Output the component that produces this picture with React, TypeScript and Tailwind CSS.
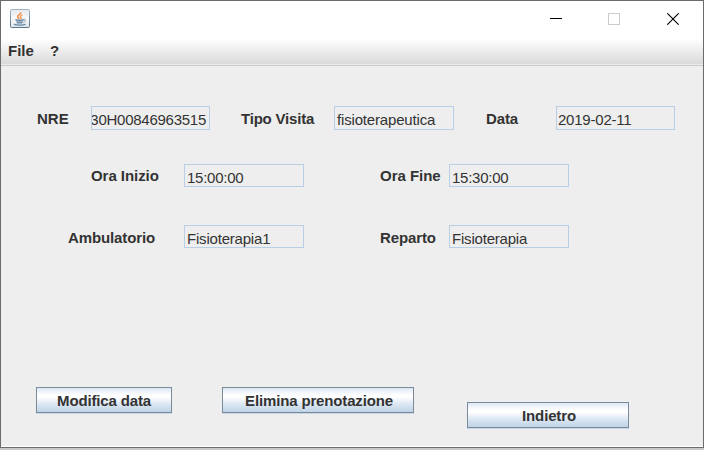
import type { ReactNode } from "react";

function Label({ className = "", children }: { className?: string; children: ReactNode }) {
  return (
    <label className={`block h-[17px] shrink-0 whitespace-nowrap font-bold leading-[17px] ${className}`}>
      {children}
    </label>
  );
}

function Field({ className = "", children }: { className?: string; children: ReactNode }) {
  return (
    <div className={`shrink-0 overflow-hidden whitespace-nowrap border border-[#b8cfe5] leading-[17px] ${className}`}>
      {children}
    </div>
  );
}

function MetalButton({ className = "", children }: { className?: string; children: ReactNode }) {
  return (
    <button
      className={`block h-[26px] shrink-0 border border-[#7a8a99] bg-[linear-gradient(to_bottom,#dde8f3_0%,#ffffff_30%,#ffffff_38%,#dde8f3_66%,#bfd3e7_100%)] pt-[4px] text-center font-bold leading-[17px] tracking-[-0.15px] shadow-[0_1px_0_#c5d7e8] ${className}`}
    >
      <span className="block h-[20px]">{children}</span>
    </button>
  );
}

function JavaIcon() {
  return (
    <svg width="20" height="20" viewBox="0 0 20 20" fill="none">
      <defs>
        <linearGradient id="tile" x1="0" y1="0" x2="0" y2="1">
          <stop offset="0" stopColor="#e4e9ed" />
          <stop offset="0.5" stopColor="#f8f9fa" />
          <stop offset="1" stopColor="#dfe4e8" />
        </linearGradient>
        <linearGradient id="edge" x1="0" y1="0" x2="0" y2="1">
          <stop offset="0" stopColor="#a3b4c2" />
          <stop offset="1" stopColor="#58758b" />
        </linearGradient>
      </defs>
      <rect x="0.5" y="0.5" width="19" height="18" rx="1.2" fill="url(#tile)" stroke="url(#edge)" />
      <path d="M10.800 3.200c.6 1.800-3.400 2.700-3.200 4.500.1 1 1 1.600 1.800 2.400" stroke="#ee8a3c" strokeWidth="1.500" />
      <path d="M12.400 5.900c-2 .8-2.700 1.700-1.500 2.700.6.6.1 1.200-.7 1.700" stroke="#ee9c5c" strokeWidth="1.400" />
      <path d="M5.400 10.500c.4.900 8 .9 8.400 0l-1.300 3.300H6.800z" fill="#9bb1c4" />
      <path d="M5.400 10.500c2 .8 6.400.8 8.400 0M6.800 13.900h5.600" stroke="#6387a5" strokeWidth="1.100" />
      <path d="M13.200 10.400c2.900-.8 2.900 1.900.2 2.700" stroke="#7895ad" />
      <path d="M4 15.300c1.800 1.200 9.400 1.200 11.600 0" stroke="#6387a5" strokeWidth="1.200" />
    </svg>
  );
}

export default function App() {
  return (
    <div className="h-[450px] w-[704px] overflow-hidden bg-[#c8c8c8] font-['Liberation_Sans',Arial,sans-serif] text-[15px] text-[#333333]">
      <div className="flex h-[448px] w-[704px] flex-col border border-[#6b6b6b] bg-[#eeeeee]">
        <header className="flex h-[36px] shrink-0 items-start bg-white">
          <div className="pl-[9px] pt-[8px]">
            <JavaIcon />
          </div>
          <div className="ml-auto flex items-start pr-[24px] pt-[12px]">
            <svg width="12" height="12" className="mr-[46px]" shapeRendering="crispEdges">
              <path d="M0 5.500H12" stroke="#000" />
            </svg>
            <svg width="12" height="12" className="mr-[47px]" shapeRendering="crispEdges">
              <path d="M.5.5h11v11H.5z" fill="none" stroke="#cccccc" />
            </svg>
            <svg width="12" height="12">
              <path d="M.3.300 11.700 11.700M11.700.3.300 11.700" stroke="#000" strokeWidth="1.100" />
            </svg>
          </div>
        </header>

        <nav className="flex h-[29px] shrink-0 items-start border-b border-[#cccccc] bg-[linear-gradient(to_bottom,#ffffff_0%,#ffffff_6%,#dadada_96%,#eaeaea_97%)] pl-[7px] pt-[5px] font-bold leading-[17px]">
          <span className="w-[42px]">File</span>
          <span>?</span>
        </nav>

        <main className="flex flex-1 flex-col border-b border-white">
          <div className="mt-[40px] flex h-[24px] pl-[36px]">
            <Label className="mt-[4px] w-[54px]">NRE</Label>
            <Field className="flex h-[24px] w-[119px] justify-end pr-[3px] pt-[4px]">
              <span className="tracking-[-0.26px]">30H00846963515</span>
            </Field>
            <Label className="ml-[31px] mt-[4px] w-[93px] tracking-[-0.2px]">Tipo Visita</Label>
            <Field className="h-[24px] w-[120px] pl-[2px] pt-[4px] tracking-[-0.17px]">fisioterapeutica</Field>
            <Label className="ml-[32px] mt-[4px] w-[70px] tracking-[-0.1px]">Data</Label>
            <Field className="h-[24px] w-[119px] pl-[1px] pt-[4px] tracking-[-0.22px]">2019-02-11</Field>
          </div>

          <div className="mt-[34px] flex h-[23px] pl-[90px]">
            <Label className="mt-[3px] w-[93px] tracking-[-0.05px]">Ora Inizio</Label>
            <Field className="h-[23px] w-[120px] pl-[2px] pt-[4px] tracking-[-0.25px]">15:00:00</Field>
            <Label className="ml-[76px] mt-[3px] w-[69px] tracking-[-0.03px]">Ora Fine</Label>
            <Field className="h-[23px] w-[120px] pl-[2px] pt-[4px] tracking-[-0.25px]">15:30:00</Field>
          </div>

          <div className="mt-[38px] flex h-[23px] pl-[67px]">
            <Label className="mt-[4px] w-[116px] tracking-[-0.12px]">Ambulatorio</Label>
            <Field className="h-[23px] w-[120px] pl-[2px] pt-[4px] tracking-[-0.2px]">Fisioterapia1</Field>
            <Label className="ml-[76px] mt-[4px] w-[69px] tracking-[-0.12px]">Reparto</Label>
            <Field className="h-[23px] w-[120px] pl-[2px] pt-[4px] tracking-[-0.2px]">Fisioterapia</Field>
          </div>

          <div className="mt-[139px] flex items-start pl-[35px]">
            <MetalButton className="w-[136px]">Modifica data</MetalButton>
            <MetalButton className="ml-[50px] w-[192px] pl-[2px]">Elimina prenotazione</MetalButton>
            <MetalButton className="ml-[53px] mt-[15px] w-[162px] pl-[2px]">Indietro</MetalButton>
          </div>
        </main>
      </div>
    </div>
  );
}
